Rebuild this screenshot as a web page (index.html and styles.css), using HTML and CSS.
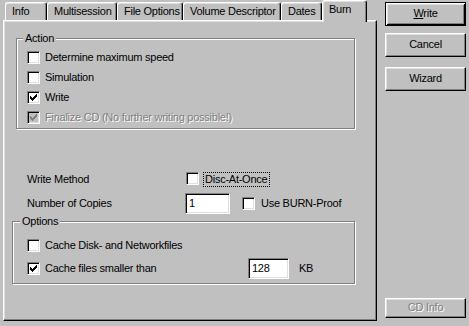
FILE: index.html
```html
<!DOCTYPE html>
<html>
<head>
<meta charset="utf-8">
<link rel="stylesheet" href="styles.css">
</head>
<body>
<div class="dlg">
  <div class="tabctl">
    <div class="tabs">
      <div class="tab w-info">Info</div>
      <div class="tab w-multi">Multisession</div>
      <div class="tab w-file">File Options</div>
      <div class="tab w-vol">Volume Descriptor</div>
      <div class="tab w-dates">Dates</div>
      <div class="tab tab-sel w-burn">Burn</div>
    </div>
    <div class="panel">
      <div class="group group-action">
        <span class="legend">Action</span>
        <div class="checks">
          <div class="chk-row"><span class="cb"></span><span class="lbl">Determine maximum speed</span></div>
          <div class="chk-row"><span class="cb"></span><span class="lbl">Simulation</span></div>
          <div class="chk-row"><span class="cb"><svg width="7" height="7" viewBox="0 0 7 7" shape-rendering="crispEdges"><path d="M6 0h1v1h-1zM5 1h2v1h-2zM0 2h1v1h-1zM4 2h3v1h-3zM0 3h2v1h-2zM3 3h3v1h-3zM0 4h5v1h-5zM1 5h3v1h-3zM2 6h1v1h-1z" fill="#000"/></svg></span><span class="lbl">Write</span></div>
          <div class="chk-row"><span class="cb cb-dis"><svg width="7" height="7" viewBox="0 0 7 7" shape-rendering="crispEdges"><path d="M6 0h1v1h-1zM5 1h2v1h-2zM0 2h1v1h-1zM4 2h3v1h-3zM0 3h2v1h-2zM3 3h3v1h-3zM0 4h5v1h-5zM1 5h3v1h-3zM2 6h1v1h-1z" fill="#808080"/></svg></span><span class="lbl lbl-dis">Finalize CD (No further writing possible!)</span></div>
        </div>
      </div>

      <div class="row-method">
        <span class="form-lbl lbl-method">Write Method</span>
        <span class="cb"></span>
        <span class="focus-lbl">Disc-At-Once</span>
      </div>

      <div class="row-copies">
        <span class="form-lbl lbl-copies">Number of Copies</span>
        <span class="field field-copies">1</span>
        <span class="cb cb-burnproof"></span>
        <span class="lbl lbl-burnproof">Use BURN-Proof</span>
      </div>

      <div class="group group-options">
        <span class="legend legend-options">Options</span>
        <div class="chk-row"><span class="cb"></span><span class="lbl">Cache Disk- and Networkfiles</span></div>
        <div class="opt-row2">
          <div class="chk-row chk-cache"><span class="cb"><svg width="7" height="7" viewBox="0 0 7 7" shape-rendering="crispEdges"><path d="M6 0h1v1h-1zM5 1h2v1h-2zM0 2h1v1h-1zM4 2h3v1h-3zM0 3h2v1h-2zM3 3h3v1h-3zM0 4h5v1h-5zM1 5h3v1h-3zM2 6h1v1h-1z" fill="#000"/></svg></span><span class="lbl">Cache files smaller than</span></div>
          <span class="field field-kb">128</span>
          <span class="kb">KB</span>
        </div>
      </div>
    </div>
  </div>

  <div class="buttons">
    <div class="btn btn-default btn-write"><span><u>W</u>rite</span></div>
    <div class="btn btn-cancel">Cancel</div>
    <div class="btn btn-wizard">Wizard</div>
    <div class="btn btn-dis btn-cdinfo">CD Info</div>
  </div>
</div>
</body>
</html>
```

FILE: styles.css
```css
html, body {
  margin: 0;
  padding: 0;
  background: #c0c0c0;
}

body {
  width: 469px;
  height: 326px;
  overflow: hidden;
  font-family: "Liberation Sans", Arial, sans-serif;
  font-size: 11px;
  letter-spacing: -0.25px;
  line-height: 13px;
  color: #000;
}

.dlg {
  display: flex;
  height: 326px;
}

/* ---------- tab control ---------- */
.tabctl {
  margin-left: 3px;
  width: 374px;
  display: flex;
  flex-direction: column;
}

.tabs {
  display: flex;
  align-items: flex-end;
  height: 20px;
  padding-left: 2px;
}

.tab {
  box-sizing: border-box;
  height: 18px;
  padding: 2px 0 0 6px;
  border-top: 1px solid #fff;
  border-left: 1px solid #fff;
  border-right: 1px solid #000;
  border-radius: 3px 3px 0 0;
  box-shadow: inset -1px 0 #808080, inset 0 1px #dfdfdf;
  background: #c0c0c0;
  white-space: nowrap;
  flex: none;
}

.tab-sel {
  height: 22px;
  margin-bottom: -2px;
  position: relative;
  z-index: 2;
  box-shadow: inset -1px 0 #808080, inset 1px 1px #dfdfdf;
}

.w-info { width: 42px; }
.w-multi { width: 70px; }
.w-file { width: 66px; }
.w-vol { width: 98px; }
.w-dates { width: 41px; }
.w-burn { width: 45px; }

.panel {
  box-sizing: border-box;
  height: 301px;
  border-top: 1px solid #fff;
  border-left: 1px solid #fff;
  border-right: 1px solid #000;
  border-bottom: 1px solid #000;
  box-shadow: inset -1px -1px #808080, inset 1px 1px #dfdfdf;
  display: flex;
  flex-direction: column;
  align-items: flex-start;
}

/* ---------- group boxes ---------- */
.group {
  box-sizing: border-box;
  position: relative;
  border: 1px solid #808080;
  box-shadow: inset 1px 1px #fff, 1px 1px #fff;
}

.legend {
  position: absolute;
  top: -7px;
  left: 6px;
  padding: 0 2px;
  background: #c0c0c0;
  white-space: nowrap;
}

.legend-options {
  left: 7px;
}

.group-action {
  margin: 17px 0 0 12px;
  width: 339px;
  height: 91px;
  padding: 12px 0 0 10px;
}

.checks {
  display: flex;
  flex-direction: column;
  gap: 7px;
}

.chk-row {
  display: flex;
  align-items: center;
  height: 13px;
}

.cb {
  box-sizing: border-box;
  width: 13px;
  height: 13px;
  flex: none;
  background: #fff;
  border-top: 1px solid #808080;
  border-left: 1px solid #808080;
  border-right: 1px solid #fff;
  border-bottom: 1px solid #fff;
  box-shadow: inset 1px 1px #000, inset -1px -1px #dfdfdf;
  display: flex;
  align-items: center;
  justify-content: center;
}

.cb svg {
  display: block;
}

.cb-dis {
  background: #c0c0c0;
}

.lbl {
  margin-left: 5px;
  white-space: nowrap;
}

.lbl-dis {
  color: #808080;
  text-shadow: 1px 1px #fff;
}

/* ---------- write method / copies ---------- */
.row-method {
  display: flex;
  align-items: flex-start;
  height: 15px;
  margin-top: 43px;
  padding-left: 23px;
}

.form-lbl {
  white-space: nowrap;
  flex: none;
}

.lbl-method {
  width: 159px;
  padding-top: 1px;
}

.focus-lbl {
  margin-left: 4px;
  padding: 0 2px 0 1px;
  border: 1px dotted #000;
  white-space: nowrap;
}

.row-copies {
  display: flex;
  align-items: center;
  height: 21px;
  margin-top: 6px;
  padding-left: 23px;
}

.lbl-copies {
  width: 158px;
}

.field {
  box-sizing: border-box;
  height: 21px;
  flex: none;
  background: #fff;
  border-top: 1px solid #808080;
  border-left: 1px solid #808080;
  border-right: 1px solid #fff;
  border-bottom: 1px solid #fff;
  box-shadow: inset 1px 1px #000, inset -1px -1px #dfdfdf;
  padding: 0 0 1px 3px;
  display: flex;
  align-items: center;
}

.field-copies {
  width: 45px;
}

.cb-burnproof {
  margin-left: 12px;
}

.lbl-burnproof {
  margin-left: 6px;
}

/* ---------- options ---------- */
.group-options {
  margin: 7px 0 0 8px;
  width: 343px;
  height: 63px;
  padding: 17px 0 0 14px;
}

.opt-row2 {
  display: flex;
  align-items: center;
  height: 21px;
  margin-top: 6px;
}

.chk-cache {
  width: 221px;
}

.field-kb {
  width: 41px;
}

.kb {
  margin-left: 10px;
}

/* ---------- buttons ---------- */
.buttons {
  margin-left: 8px;
  width: 81px;
  display: flex;
  flex-direction: column;
}

.btn {
  box-sizing: border-box;
  height: 24px;
  border-top: 1px solid #fff;
  border-left: 1px solid #fff;
  border-right: 1px solid #000;
  border-bottom: 1px solid #000;
  box-shadow: inset -1px -1px #808080, inset 1px 1px #dfdfdf;
  display: flex;
  align-items: center;
  justify-content: center;
  padding-bottom: 1px;
  white-space: nowrap;
}

.btn-default {
  border: 1px solid #000;
  box-shadow: inset 1px 1px #fff, inset -1px -1px #000, inset 2px 2px #dfdfdf, inset -2px -2px #808080;
}

.btn-write {
  margin-top: 2px;
}

.btn-cancel {
  margin-top: 7px;
}

.btn-wizard {
  margin-top: 10px;
}

.btn-cdinfo {
  margin-top: auto;
  margin-bottom: 8px;
  height: 20px;
}

.btn-dis {
  color: #808080;
  text-shadow: 1px 1px #fff;
}
```
